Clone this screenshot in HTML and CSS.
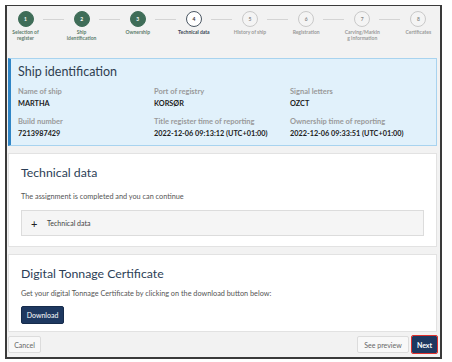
FILE: index.html
```html
<!DOCTYPE html>
<html>
<head>
<meta charset="utf-8">
<link rel="stylesheet" href="styles.css">
</head>
<body>
<div class="frame">
  <div class="stepper">
    <div class="step done"><div class="dot">1</div><div class="lbl">Selection of<br>register</div></div>
    <div class="step done"><div class="dot">2</div><div class="lbl">Ship<br>identification</div></div>
    <div class="step done"><div class="dot">3</div><div class="lbl">Ownership</div></div>
    <div class="step active"><div class="dot">4</div><div class="lbl">Technical data</div></div>
    <div class="step"><div class="dot">5</div><div class="lbl">History of ship</div></div>
    <div class="step"><div class="dot">6</div><div class="lbl">Registration</div></div>
    <div class="step"><div class="dot">7</div><div class="lbl">Carving/Markin<br>g information</div></div>
    <div class="step"><div class="dot">8</div><div class="lbl">Certificates</div></div>
  </div>

  <section class="ident">
    <h2 class="ident-title">Ship identification</h2>
    <div class="ident-grid">
      <div class="field"><div class="f-label">Name of ship</div><div class="f-value">MARTHA</div></div>
      <div class="field"><div class="f-label">Port of registry</div><div class="f-value">KORSØR</div></div>
      <div class="field"><div class="f-label">Signal letters</div><div class="f-value">OZCT</div></div>
      <div class="field"><div class="f-label">Build number</div><div class="f-value">7213987429</div></div>
      <div class="field"><div class="f-label">Title register time of reporting</div><div class="f-value">2022-12-06 09:13:12 (UTC+01:00)</div></div>
      <div class="field"><div class="f-label">Ownership time of reporting</div><div class="f-value">2022-12-06 09:33:51 (UTC+01:00)</div></div>
    </div>
  </section>

  <section class="card tech">
    <h2 class="card-title">Technical data</h2>
    <p class="card-text">The assignment is completed and you can continue</p>
    <div class="accordion"><span class="plus">+</span><span class="acc-text">Technical data</span></div>
  </section>

  <section class="card cert">
    <h2 class="card-title">Digital Tonnage Certificate</h2>
    <p class="card-text cert-text">Get your digital Tonnage Certificate by clicking on the download button below:</p>
    <button class="btn btn-primary">Download</button>
  </section>

  <div class="footer">
    <button class="btn btn-light">Cancel</button>
    <div class="footer-right">
      <button class="btn btn-light btn-preview">See preview</button>
      <button class="btn btn-next">Next</button>
    </div>
  </div>
</div>
</body>
</html>
```

FILE: styles.css
```css
* { box-sizing: border-box; }
html, body { margin: 0; padding: 0; background: #ffffff; }
body { font-family: Lato, "Noto Sans", sans-serif; color: #333; }

.frame {
  margin: 5px 0 0 5px;
  width: 437px;
  height: 354px;
  border: 2px solid #3a3a3a;
  border-top-width: 1px;
  background: #f2f2f2;
  display: flex;
  flex-direction: column;
}

.stepper {
  height: 52px;
  padding-top: 5px;
  display: grid;
  grid-template-columns: repeat(8, 37px);
  column-gap: 19.14px;
  flex-shrink: 0;
}
.step {
  position: relative;
  display: flex;
  flex-direction: column;
  align-items: center;
}
.step:not(:last-child)::after {
  content: "";
  position: absolute;
  top: 8px;
  left: calc(50% + 17px);
  width: 21px;
  height: 1px;
  background: #d4d4d4;
}
.dot {
  width: 16px;
  height: 16px;
  border-radius: 50%;
  border: 1px solid #c9c9c9;
  background: #f4f4f4;
  color: #8a8a8a;
  font-size: 5px;
  font-weight: 700;
  display: flex;
  align-items: center;
  justify-content: center;
}
.lbl {
  margin-top: 2px;
  font-size: 5px;
  line-height: 6px;
  white-space: nowrap;
  text-align: center;
  color: #9a9a9a;
  font-weight: 700;
}
.step.done .dot { background: #3f6d58; border-color: #3f6d58; color: #ffffff; }
.step.done .lbl { color: #5f7d6e; }
.step.active .dot { background: #ffffff; border-color: #4b5763; color: #333; }
.step.active .lbl { color: #3c4856; }

.ident {
  margin: 0 3px 0 1px;
  height: 88px;
  flex-shrink: 0;
  background: #e1f1fb;
  border: 1px solid #a8d3ef;
  border-left: 3px solid #2f85c6;
  padding: 3px 0 0 7px;
}
.ident-title {
  margin: 0;
  font-size: 12.5px;
  line-height: 20px;
  font-weight: 400;
  color: #2f3e50;
}
.ident-grid {
  margin-top: 4px;
  display: grid;
  grid-template-columns: repeat(3, 136px);
  row-gap: 6px;
}
.f-label {
  font-size: 7.5px;
  line-height: 12px;
  font-weight: 700;
  color: #9a9a9a;
}
.f-value {
  font-size: 7.3px;
  line-height: 12px;
  font-weight: 700;
  color: #222;
}

.card {
  margin: 7px 3px 0 1px;
  background: #ffffff;
  border: 1px solid #e2e2e2;
  padding: 10px 12px 0 12px;
  flex-shrink: 0;
}
.tech { height: 94px; }
.cert { height: 78px; }
.card-title {
  margin: 0;
  font-size: 12.3px;
  line-height: 18px;
  font-weight: 400;
  color: #2c3e56;
}
.card-text {
  margin: 9px 0 0 0;
  font-size: 7.3px;
  line-height: 12px;
  color: #555;
}
.cert-text { margin-top: 5px; }
.accordion {
  margin-top: 7px;
  height: 26px;
  background: #f5f5f5;
  border: 1px solid #dcdcdc;
  display: flex;
  align-items: center;
  padding-left: 9px;
}
.plus {
  font-size: 11px;
  font-weight: 400;
  color: #222;
  width: 16px;
}
.acc-text {
  font-size: 7px;
  color: #444;
}

.btn {
  font-family: Lato, "Noto Sans", sans-serif;
  font-size: 7px;
  border-radius: 2px;
  padding: 0;
  cursor: pointer;
}
.btn-primary {
  margin-top: 6px;
  width: 43px;
  height: 18px;
  background: #1e3860;
  border: 1px solid #162b4b;
  color: #ffffff;
}
.footer {
  flex: 1;
  display: flex;
  align-items: center;
  justify-content: space-between;
  padding: 0 2px 0 1px;
}
.footer-right { display: flex; align-items: center; gap: 2px; }
.btn-light {
  width: 33px;
  height: 17px;
  background: #f8f8f8;
  border: 1px solid #dcdcdc;
  color: #666;
}
.btn-preview { width: 52px; }
.btn-next {
  width: 27px;
  height: 19px;
  background: #1e3860;
  border: 1px solid #dfe3ea;
  outline: 1px solid #e0302c;
  outline-offset: -1px;
  color: #ffffff;
  font-weight: 700;
}
```
